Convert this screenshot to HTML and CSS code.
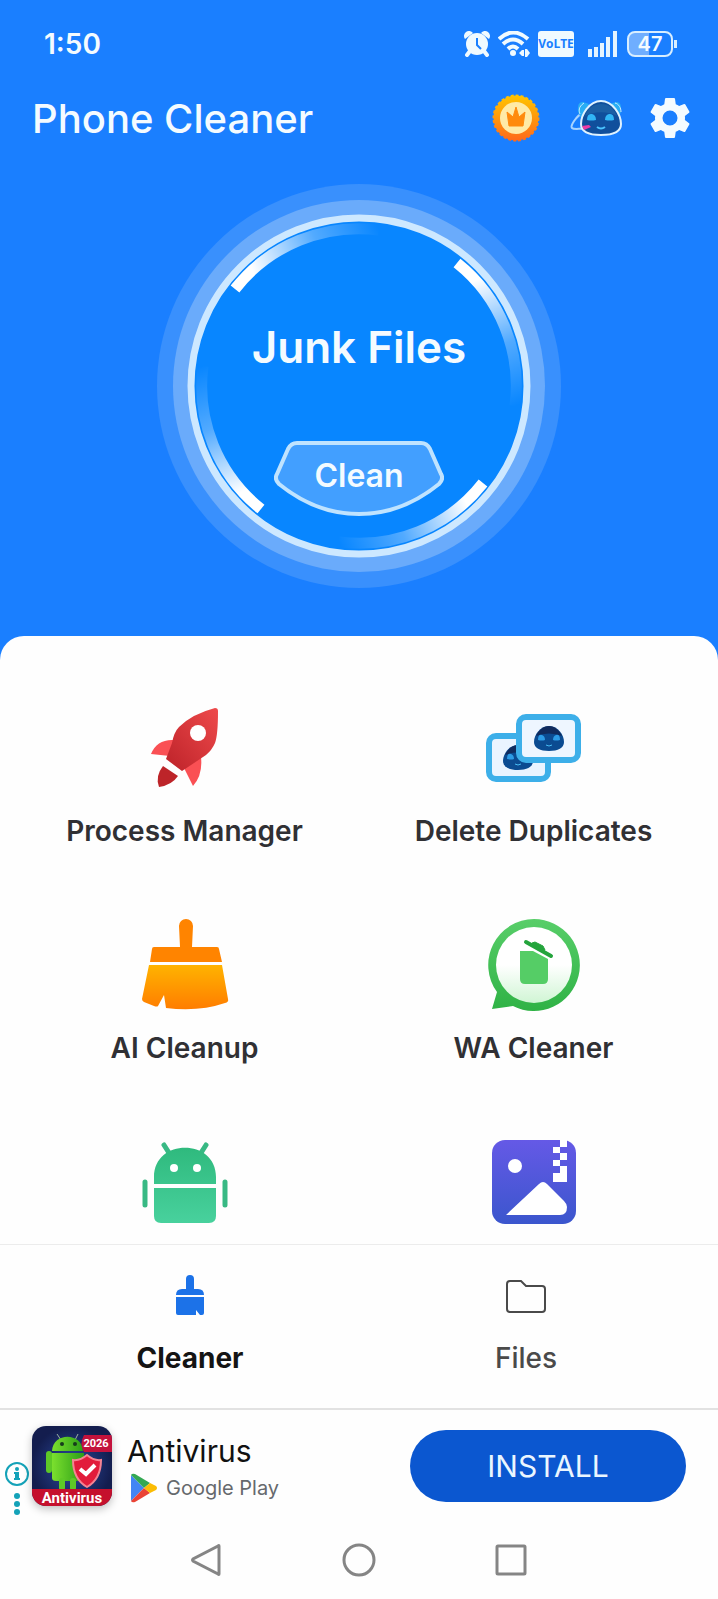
FILE: index.html
```html
<!DOCTYPE html>
<html lang="en">
<head>
    <meta charset="UTF-8">
    <meta name="viewport" content="width=device-width, initial-scale=1.0">
    <title>Phone Cleaner</title>
    <link rel="stylesheet" href="styles.css">
</head>
<body>
    <section class="hero">
        <div class="status-bar">
            <span class="clock">1:50</span>
            <div class="status-icons">
                <svg class="alarm" width="26" height="26" viewBox="0 0 26 26">
                    <path d="M6 20 3 24M20 20l3 4" stroke="#f0faff" stroke-width="4" stroke-linecap="round"/>
                    <path d="M1 8a5 5 0 0 1 8-6zM25 8a5 5 0 0 0-8-6z" fill="#f0faff"/>
                    <circle cx="13" cy="13" r="11" fill="#f0faff"/>
                    <path d="M13 7v7l4 4" fill="none" stroke="#1a7fff" stroke-width="2"/>
                </svg>
                <svg class="wifi" width="32" height="26" viewBox="0 0 32 26">
                    <path d="M1 8q14-13 29 0M5 13q10-9 20 0M10 18q5-5 10 0" fill="none" stroke="#f0faff" stroke-width="4"/>
                    <circle cx="15" cy="22" r="3" fill="#f0faff"/>
                    <path d="M21 22l3-3h2v6h-2zM27 18h2l3 4-3 4h-2z" fill="#f0faff"/>
                </svg>
                <span class="volte">VoLTE</span>
                <svg class="signal" width="29" height="26" viewBox="0 0 29 26">
                    <path d="M0 18h4v8H0zM6 16h4v10H6zM12 12h4v14h-4zM18 6h4v20h-4zM25 0h4v26h-4z" fill="#e4f4ff"/>
                </svg>
                <span class="battery">47</span>
            </div>
        </div>

        <header class="top-bar">
            <h1>Phone Cleaner</h1>
            <div class="actions">
                <button class="icon-btn" aria-label="Premium">
                    <svg width="48" height="48" viewBox="0 0 48 48">
                        <defs>
                            <linearGradient id="coin" x1="0" y1="0" x2="0" y2="1">
                                <stop offset="0" stop-color="#ffc400"/>
                                <stop offset="1" stop-color="#ff6a1a"/>
                            </linearGradient>
                        </defs>
                        <circle cx="24" cy="24" r="22.500" fill="url(#coin)"/>
                        <circle cx="24" cy="24" r="22.500" fill="none" stroke="url(#coin)" stroke-width="2" stroke-dasharray="3 2"/>
                        <circle cx="24" cy="24" r="16" fill="#ffeaa6"/>
                        <path d="M15 18l6 5 3-10 3 10 6-5-2 14H17z" fill="#ff8a0c" stroke="#ff8a0c" stroke-linejoin="round"/>
                    </svg>
                </button>
                <button class="icon-btn" aria-label="AI assistant">
                    <svg width="52" height="38" viewBox="0 0 52 38">
                        <path d="M14 13C6 17 0 27 2 29s9 0 14 1" fill="none" stroke="#a9d4ff" stroke-width="2"/>
                        <path d="M8 13q-1-11 5-10l6 2-8 14zM51 13q1-11-5-10l-6 2 8 14z" fill="#29aef5"/>
                        <path d="M14 4C8 8 9 12 10 15M45 4c4 1 6 5 6 9" fill="none" stroke="#cdeaff" stroke-width="1"/>
                        <path d="M31 2c12 0 20 14 20 23 0 8-8 11-20 11s-20-3-20-11C11 16 19 2 31 2z" fill="#104f9c" stroke="#dff2ff" stroke-width="2"/>
                        <path d="M31 5c9 0 13 5 16 12-9-5-23-5-32 0 2-7 8-12 16-12z" fill="#1c5fa4"/>
                        <path d="M17 21q0-7 5-6 4 1 4 6-5 1-9 0zM44 21q0-7-5-6-4 1-4 6 5 1 9 0z" fill="#31b6f6"/>
                        <path d="M27 28q4 3 8 0" fill="none" stroke="#4cc4ff" stroke-width="2"/>
                        <path d="M12 27l7-1 2 2-7 3z" fill="#ed3ca6"/>
                    </svg>
                </button>
                <button class="icon-btn" aria-label="Settings">
                    <svg width="50" height="50" viewBox="0 0 24 24">
                        <path fill="#f4fbff" d="M19.14 12.94c.04-.3.06-.61.06-.94s-.02-.64-.07-.94l2.03-1.58c.18-.14.23-.41.12-.61l-1.92-3.32c-.12-.22-.37-.29-.59-.22l-2.39.96c-.5-.38-1.03-.7-1.62-.94l-.36-2.54c-.04-.24-.24-.41-.48-.41h-3.84c-.24 0-.43.17-.47.41l-.36 2.54c-.59.24-1.13.57-1.62.94l-2.39-.96c-.22-.08-.47 0-.59.22L2.74 8.87c-.12.21-.08.47.12.61l2.03 1.58c-.05.3-.09.63-.09.94s.02.64.07.94l-2.03 1.58c-.18.14-.23.41-.12.61l1.92 3.32c.12.22.37.29.59.22l2.39-.96c.5.38 1.03.7 1.62.94l.36 2.54c.05.24.24.41.48.41h3.84c.24 0 .44-.17.47-.41l.36-2.54c.59-.24 1.13-.56 1.62-.94l2.39.96c.22.08.47 0 .59-.22l1.92-3.32c.12-.22.07-.47-.12-.61zM12 15.6A3.6 3.6 0 1 1 12 8.400a3.600 3.600 0 0 1 0 7.200z"/>
                    </svg>
                </button>
            </div>
        </header>

        <div class="dial">
            <svg class="dial-rings" viewBox="-202 -202 404 404">
                <defs>
                    <linearGradient id="arcA" gradientUnits="userSpaceOnUse" x1="-124" y1="-97" x2="20" y2="-157">
                        <stop offset="0.15" stop-color="#fff"/>
                        <stop offset="0.6" stop-color="#fff" stop-opacity="0.3"/>
                        <stop offset="1" stop-color="#fff" stop-opacity="0"/>
                    </linearGradient>
                    <linearGradient id="arcB" gradientUnits="userSpaceOnUse" x1="98" y1="-123" x2="157" y2="20">
                        <stop offset="0.15" stop-color="#fff"/>
                        <stop offset="0.6" stop-color="#fff" stop-opacity="0.3"/>
                        <stop offset="1" stop-color="#fff" stop-opacity="0"/>
                    </linearGradient>
                </defs>
                <circle r="202" fill="#3990fd"/>
                <circle r="186" fill="#6aabfb"/>
                <circle r="168" fill="#0886ff" stroke="#cde8ff" stroke-width="7"/>
                <g fill="none" stroke-width="11">
                    <path d="M-124-97A157 157 0 0 1 20-156" stroke="url(#arcA)"/>
                    <path d="M98-123A157 157 0 0 1 156 20" stroke="url(#arcB)"/>
                    <path d="M-124-97A157 157 0 0 1 20-156" stroke="url(#arcA)" transform="rotate(180)"/>
                    <path d="M98-123A157 157 0 0 1 156 20" stroke="url(#arcB)" transform="rotate(180)"/>
                </g>
            </svg>
            <div class="dial-content">
                <h2>Junk Files</h2>
                <button class="clean-btn">
                    <svg width="170" height="76" viewBox="0 0 170 76">
                        <path d="M23 2h124q6 0 9 6l11 25q3 5-2 10Q128 73 85 73T5 43q-5-5-2-10L14 8q3-6 9-6z" fill="#429fff" stroke="#bfe3ff" stroke-width="4"/>
                    </svg>
                    <span>Clean</span>
                </button>
            </div>
        </div>
    </section>

    <main class="sheet">
        <a class="tile" href="#">
            <svg width="96" height="96" viewBox="0 0 96 96">
                <defs>
                    <linearGradient id="rocket" x1="1" y1="0" x2="0" y2="1">
                        <stop offset="0" stop-color="#ee4a4b"/>
                        <stop offset="1" stop-color="#bd2229"/>
                    </linearGradient>
                </defs>
                <path d="M37 40Q20 39 14 54l19 2zM47 68l9 18q10-11 8-29z" fill="#fa5054"/>
                <path d="M81 11q0-3-3-3Q55 14 42 27q-5 5-7 16L29 59l16 12 24-16q6-5 9-12 3-8 3-32z" fill="url(#rocket)"/>
                <circle cx="61" cy="33" r="8" fill="#fff"/>
                <path d="M26 66l15 10q-6 9-19 11-4-11 4-21z" fill="#bd2429"/>
            </svg>
            <span>Process Manager</span>
        </a>
        <a class="tile" href="#">
            <svg width="96" height="96" viewBox="0 0 96 96">
                <defs>
                    <g id="bot">
                        <path d="M15 0c9 0 15 9 15 16 0 6-6 9-15 9S0 22 0 16C0 9 6 0 15 0z" fill="#0b4b91"/>
                        <path d="M15 0c6 0 11 5 13 10Q15 5 2 10C4 5 9 0 15 0z" fill="#102b5d"/>
                        <path d="M4 14q0-6 4-5 3 1 3 5-3 1-7 0zM26 14q0-6-4-5-3 1-3 5 3 1 7 0z" fill="#2c9be5"/>
                        <path d="M12 19q3 2 6 0" fill="none" stroke="#48bcf5"/>
                    </g>
                </defs>
                <rect x="3" y="36" width="59" height="43" rx="7" fill="#eaf4ff" stroke="#3dafe9" stroke-width="6"/>
                <use href="#bot" x="17" y="45"/>
                <rect x="33" y="17" width="59" height="43" rx="7" fill="#eef6ff" stroke="#3dafe9" stroke-width="6"/>
                <use href="#bot" x="48" y="26"/>
            </svg>
            <span>Delete Duplicates</span>
        </a>
        <a class="tile" href="#">
            <svg width="96" height="96" viewBox="0 0 96 96">
                <defs>
                    <linearGradient id="broom" x1="0" y1="0" x2="0" y2="1">
                        <stop offset="0" stop-color="#ffb300"/>
                        <stop offset="1" stop-color="#ff7d00"/>
                    </linearGradient>
                </defs>
                <path d="M43 30L42 9a7 7 0 0 1 14 0l-1 21h25q2 0 2 2l3 13H13l2-13q0-2 2-2h25z" fill="#ff8400"/>
                <path d="M12 48h73l6 34q1 3-3 4-26 9-59 5l-2-13-6 11q-1 1-4 0L7 85q-2-1-2-3z" fill="url(#broom)"/>
            </svg>
            <span>AI Cleanup</span>
        </a>
        <a class="tile" href="#">
            <svg width="96" height="96" viewBox="0 0 96 96">
                <defs>
                    <linearGradient id="bubble" x1="0" y1="0" x2="0" y2="1">
                        <stop offset="0" stop-color="#58ce69"/>
                        <stop offset="1" stop-color="#2fb245"/>
                    </linearGradient>
                    <linearGradient id="bubbleIn" x1="0" y1="0" x2="0" y2="1">
                        <stop offset="0.5" stop-color="#fff"/>
                        <stop offset="1" stop-color="#d0f5d4"/>
                    </linearGradient>
                </defs>
                <path d="M48 2a46 46 0 1 1-21 87L6 92l5-17A46 46 0 0 1 48 2z" fill="url(#bubble)"/>
                <circle cx="48" cy="48" r="38" fill="url(#bubbleIn)"/>
                <path d="M34 34h13l15 8v20q0 5-5 5H39q-5 0-5-5z" fill="#55cd66"/>
                <path d="M40 25l25 14" stroke="#24a43c" stroke-width="4" stroke-linecap="round"/>
                <path d="M46 26l3-1 8 4 2 4-3 2z" fill="#24a43c" stroke="#24a43c" stroke-linejoin="round"/>
            </svg>
            <span>WA Cleaner</span>
        </a>
        <a class="tile" href="#" aria-label="App Manager">
            <svg width="96" height="96" viewBox="0 0 96 96">
                <defs>
                    <linearGradient id="droid" gradientUnits="userSpaceOnUse" x1="0" y1="8" x2="0" y2="89">
                        <stop offset="0" stop-color="#2db87b"/>
                        <stop offset="1" stop-color="#48d19d"/>
                    </linearGradient>
                </defs>
                <path d="M27 11l7 11M69 11l-7 11M8 48v23M88 48v23" stroke="#38b984" stroke-width="5" stroke-linecap="round"/>
                <path d="M17 50v-7C17 4 79 4 79 43v7zM17 54h62v28q0 7-7 7H24q-7 0-7-7z" fill="url(#droid)"/>
                <circle cx="37" cy="34" r="4" fill="#fff"/>
                <circle cx="60" cy="34" r="4" fill="#fff"/>
            </svg>
        </a>
        <a class="tile" href="#" aria-label="Image Compressor">
            <svg width="96" height="96" viewBox="0 0 96 96">
                <defs>
                    <linearGradient id="photo" x1="0" y1="0" x2="0" y2="1">
                        <stop offset="0" stop-color="#6559e6"/>
                        <stop offset="1" stop-color="#3b56cd"/>
                    </linearGradient>
                </defs>
                <rect x="6" y="6" width="84" height="84" rx="13" fill="url(#photo)"/>
                <circle cx="29" cy="32" r="7" fill="#fff"/>
                <path d="M20 81l33-31q4-4 8 0l17 17q3 3 3 6 0 8-7 8zM74 6h7v7h-7zM67 13h7v6h-7zM74 19h7v7h-7zM67 26h7v6h-7zM74 32h7v16H67v-9h7z" fill="#fff"/>
            </svg>
        </a>
    </main>

    <nav class="tabs">
        <a class="tab active" href="#">
            <svg width="40" height="40" viewBox="0 0 40 40">
                <path d="M16 14V4a4 4 0 0 1 8 0v10h4q6 0 6 6H6q0-6 6-6zM6 22h28v16q0 2-2 2h-2l-4-5v5H8q-2 0-2-2z" fill="#1c72e8"/>
            </svg>
            <span>Cleaner</span>
        </a>
        <a class="tab" href="#">
            <svg width="40" height="40" viewBox="0 0 40 40">
                <path d="M4 6h11l5 5h16q3 0 3 3v20q0 3-3 3H4q-3 0-3-3V9q0-3 3-3z" fill="none" stroke="#4a4a4a" stroke-width="2"/>
            </svg>
            <span>Files</span>
        </a>
    </nav>

    <aside class="ad">
        <button class="ad-info" aria-label="Ad options">
            <svg width="24" height="54" viewBox="0 0 24 54">
                <g fill="#14a2b8">
                    <circle cx="12" cy="12" r="11" fill="none" stroke="#14a2b8" stroke-width="2"/>
                    <circle cx="12" cy="7" r="2"/>
                    <path d="M9 10h5v6h1v2H9v-2h1v-4H9z"/>
                    <circle cx="12" cy="34" r="3"/>
                    <circle cx="12" cy="42" r="3"/>
                    <circle cx="12" cy="50" r="3"/>
                </g>
            </svg>
        </button>
        <div class="app-icon">
            <svg width="80" height="80" viewBox="0 0 80 80">
                <defs>
                    <radialGradient id="night">
                        <stop offset="0" stop-color="#2c4ba0"/>
                        <stop offset="1" stop-color="#131d4e"/>
                    </radialGradient>
                    <linearGradient id="green" x1="0" y1="0" x2="1" y2="0">
                        <stop offset="0" stop-color="#7be02e"/>
                        <stop offset="1" stop-color="#2c9d17"/>
                    </linearGradient>
                </defs>
                <rect width="80" height="80" fill="url(#night)"/>
                <path d="M29 14l-4-6M43 14l3-6" stroke="#9bb2a2"/>
                <path d="M20 25C21 6 50 6 51 25zM20 27h32v25q0 3-4 3H24q-4 0-4-3z" fill="url(#green)"/>
                <path d="M17 28v16M30 55v7M41 55v7" stroke="#5ec827" stroke-width="6" stroke-linecap="round"/>
                <circle cx="30" cy="18" r="2" fill="#173c1c"/>
                <circle cx="43" cy="18" r="2" fill="#173c1c"/>
                <path d="M52 9h28v17H52q-5-8 0-17z" fill="#c3123c"/>
                <path d="M55 29q7 6 14 5 0 19-14 27-14-8-14-27 7 1 14-5z" fill="#e21c3b" stroke="#f58393" stroke-width="2"/>
                <path d="M48 43l6 5 9-9" fill="none" stroke="#fff" stroke-width="4"/>
                <path d="M0 63h80v17H0z" fill="#c5102d"/>
                <text x="64" y="21" class="year">2026</text>
                <text x="40" y="77" class="app-name">Antivirus</text>
            </svg>
        </div>
        <div class="ad-text">
            <strong>Antivirus</strong>
            <div class="store">
                <svg width="28" height="30" viewBox="0 0 28 30">
                    <path d="M1 2v26l13-13z" fill="#4285f4"/>
                    <path d="M1 2q1-2 4-1l15 9-6 5z" fill="#34a853"/>
                    <path d="M1 28q1 2 4 1l15-9-6-5z" fill="#ea4335"/>
                    <path d="M20 10l6 3q2 2 0 4l-6 3-6-5z" fill="#fbbc04"/>
                </svg>
                <span>Google Play</span>
            </div>
        </div>
        <button class="install">INSTALL</button>
    </aside>

    <div class="system-nav">
        <button class="icon-btn" aria-label="Back">
            <svg width="34" height="34" viewBox="0 0 34 34"><path d="M29 3v28q0 1-1 0L3 18q-1-1 0-2L28 3q1-1 1 0z"/></svg>
        </button>
        <button class="icon-btn" aria-label="Home">
            <svg width="34" height="34" viewBox="0 0 34 34"><circle cx="17" cy="17" r="15"/></svg>
        </button>
        <button class="icon-btn" aria-label="Recent apps">
            <svg width="34" height="34" viewBox="0 0 34 34"><rect x="3" y="3" width="28" height="28" rx="1"/></svg>
        </button>
    </div>
</body>
</html>
```
FILE: styles.css
```css
* {
    box-sizing: border-box;
}

body {
    margin: 0;
    font-family: Inter, "Liberation Sans", sans-serif;
    background-color: #fefefe;
}

h1, h2 {
    margin: 0;
}

a {
    color: inherit;
    text-decoration: none;
}

button {
    padding: 0;
    border: none;
    background: none;
    font-family: inherit;
    cursor: pointer;
}

svg {
    display: block;
}

.hero {
    padding-bottom: 72px;
    background-color: #1a7fff;
    color: #f4fbff;
}

/* Status bar */
.status-bar {
    display: flex;
    justify-content: space-between;
    align-items: center;
    height: 88px;
    padding: 0 40px 0 44px;
}

.clock {
    font-size: 28px;
    font-weight: 600;
}

.status-icons {
    display: flex;
    align-items: center;
}

.alarm {
    margin-right: 8px;
}

.wifi {
    margin-right: 8px;
}

.volte {
    width: 36px;
    margin-right: 14px;
    border-radius: 3px;
    background-color: #f0faff;
    color: #1a7fff;
    font-family: "Liberation Sans Narrow", "Open Sans", sans-serif;
    font-size: 12px;
    font-weight: 700;
    line-height: 26px;
    text-align: center;
}

.signal {
    margin-right: 10px;
}

.battery {
    position: relative;
    width: 46px;
    margin-right: 5px;
    border: 2px solid #d8eeff;
    border-radius: 8px;
    background: linear-gradient(to right, #6faeff 47%, transparent 47%);
    font-size: 20px;
    font-weight: 600;
    line-height: 22px;
    text-align: center;
}

.battery::after {
    content: "";
    position: absolute;
    top: 7px;
    right: -6px;
    width: 3px;
    height: 8px;
    background-color: #d8eeff;
}

/* Title row */
.top-bar {
    display: flex;
    justify-content: space-between;
    align-items: center;
    height: 60px;
    padding: 0 23px 0 32px;
}

.top-bar h1 {
    font-size: 40px;
    font-weight: 500;
}

.actions {
    display: flex;
    align-items: center;
    gap: 23px;
}

.actions .icon-btn:first-child {
    margin-right: 7px;
}

/* Junk files dial */
.dial {
    display: grid;
    width: 404px;
    margin: 36px auto 0;
}

.dial-rings,
.dial-content {
    grid-area: 1 / 1;
}

.dial-content {
    display: flex;
    flex-direction: column;
    align-items: center;
    padding-top: 135px;
}

.dial h2 {
    margin-bottom: 66px;
    font-size: 44px;
    font-weight: 600;
    line-height: 56px;
}

.clean-btn {
    display: grid;
    color: #f4fbff;
    font-size: 32px;
    font-weight: 600;
}

.clean-btn svg,
.clean-btn span {
    grid-area: 1 / 1;
}

.clean-btn span {
    padding-bottom: 8px;
    align-self: center;
}

/* Tools */
.sheet {
    display: grid;
    grid-template-columns: 1fr 1fr;
    row-gap: 68px;
    margin-top: -24px;
    padding: 64px 10px 14px;
    border-radius: 24px 24px 0 0;
    background-color: #fefefe;
}

.tile {
    display: flex;
    flex-direction: column;
    align-items: center;
    gap: 17px;
    color: #303034;
    font-size: 28px;
    font-weight: 600;
    line-height: 36px;
}

/* Bottom tabs */
.tabs {
    display: grid;
    grid-template-columns: 1fr 1fr;
    padding: 30px 24px 32px 22px;
    border-top: 1px solid #ececec;
}

.tab {
    display: flex;
    flex-direction: column;
    align-items: center;
    gap: 25px;
    color: #4a4a4a;
    font-size: 28px;
    font-weight: 500;
    line-height: 36px;
}

.tab.active {
    color: #141414;
    font-weight: 700;
}

/* Ad banner */
.ad {
    display: flex;
    align-items: center;
    padding: 16px 32px 16px 5px;
    border-top: 2px solid #e2e2e2;
}

.ad-info {
    align-self: flex-end;
    margin: 0 3px -10px 0;
}

.app-icon {
    margin-right: 15px;
    border-radius: 14px;
    box-shadow: 0 3px 8px rgba(0, 0, 0, 0.25);
    overflow: hidden;
}

.app-icon text {
    fill: #fff;
    font-family: Roboto, sans-serif;
    font-weight: 700;
    text-anchor: middle;
}

.year {
    font-size: 11px;
}

.app-name {
    font-size: 15px;
}

.ad-text strong {
    display: block;
    color: #111;
    font-size: 30px;
    font-weight: 400;
    line-height: 44px;
}

.store {
    display: flex;
    align-items: center;
    gap: 8px;
    padding-left: 3px;
    color: #66696d;
    font-size: 20px;
}

.install {
    width: 276px;
    height: 72px;
    margin-left: auto;
    border-radius: 36px;
    background-color: #0b57d0;
    color: #eaf6ff;
    font-size: 30px;
}

/* System navigation */
.system-nav {
    display: flex;
    justify-content: center;
    gap: 118px;
    padding: 21px 0 22px;
}

.system-nav svg {
    fill: none;
    stroke: #858585;
    stroke-width: 3;
}
```
